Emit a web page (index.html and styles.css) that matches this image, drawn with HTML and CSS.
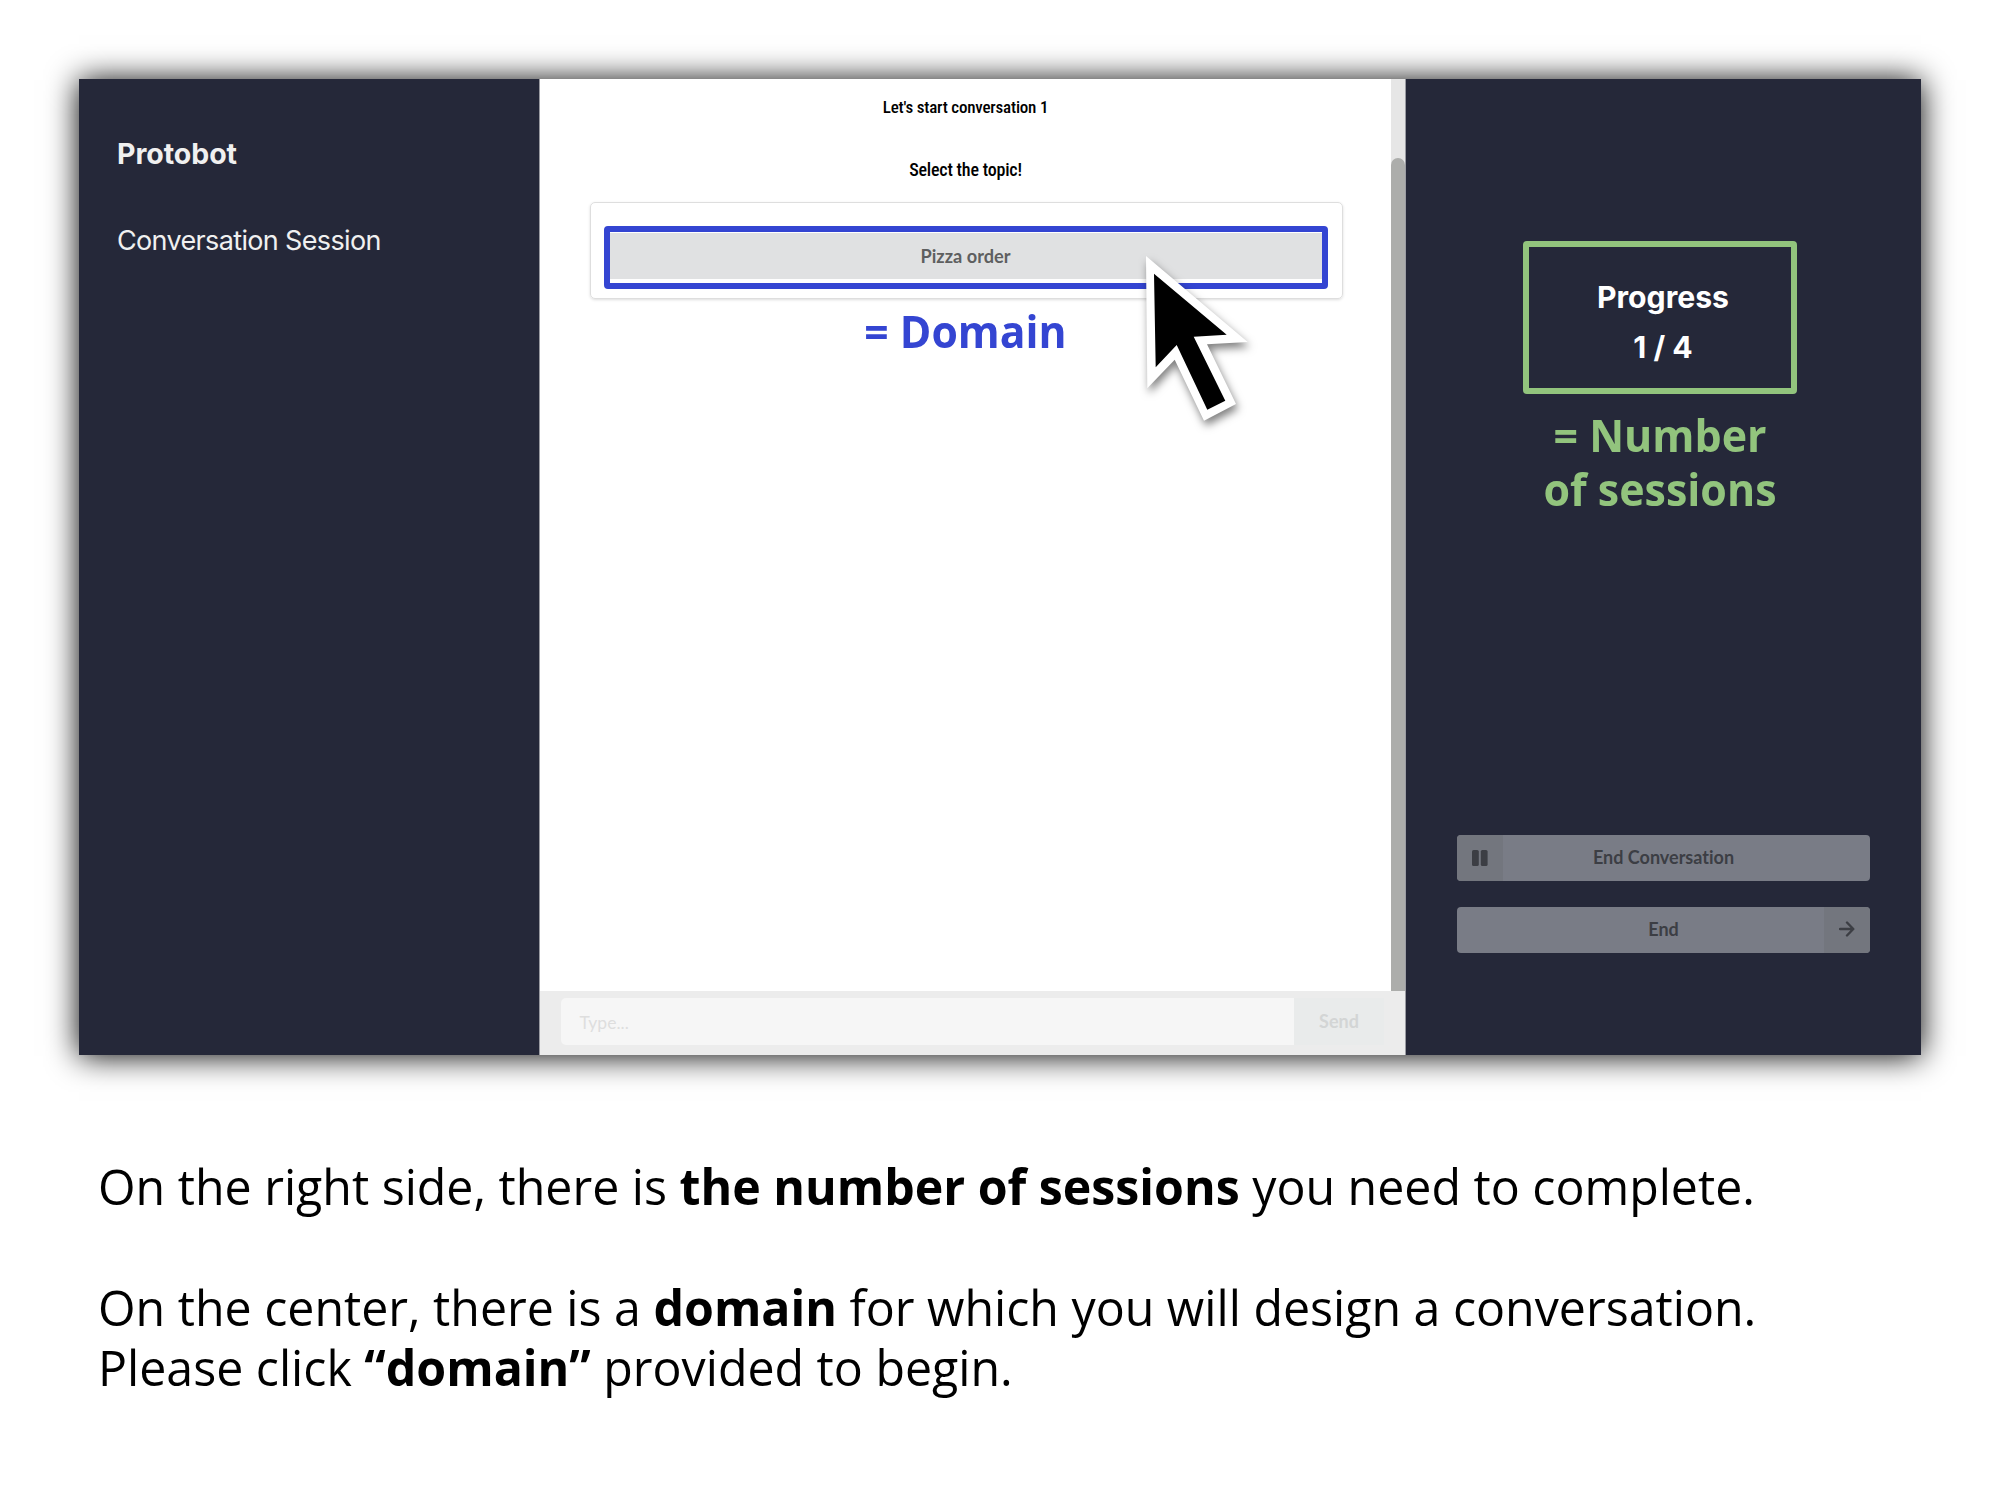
FILE: index.html
```html
<!DOCTYPE html>
<html lang="en">
<head>
<meta charset="utf-8">
<title>Protobot guide</title>
<link rel="stylesheet" href="styles.css">
</head>
<body>
<main class="slide">
  <section class="app">
    <aside class="sidebar">
      <h1 class="brand">Protobot</h1>
      <p class="nav-item">Conversation Session</p>
    </aside>
    <div class="center">
      <div class="chat">
        <div class="messages">
          <p class="notice">Let's start conversation 1</p>
          <p class="notice topic">Select the topic!</p>
          <div class="card"><div class="highlight"><button class="pizza">Pizza order</button></div></div>
          <p class="label domain">= Domain</p>
        </div>
        <div class="track"><div class="thumb"></div></div>
      </div>
      <div class="composer"><div class="field">Type...</div><div class="send">Send</div></div>
    </div>
    <aside class="status">
      <div class="progress"><span>Progress</span><span>1 / 4</span></div>
      <p class="label sessions">= Number<br>of sessions</p>
      <div class="actions">
        <div class="action"><span class="seg left"><svg width="16" height="16" viewBox="0 0 16 16"><rect x="0" y="0" width="6.8" height="16" rx="1.6"/><rect x="8.8" y="0" width="6.8" height="16" rx="1.6"/></svg></span>End Conversation</div>
        <div class="action">End<span class="seg right"><svg width="16" height="16" viewBox="0 0 16 16"><path d="M1 8H14M8 1.5L14.3 8L8 14.5" fill="none" stroke="#3c3e44" stroke-width="2.4" stroke-linecap="round" stroke-linejoin="round"/></svg></span></div>
      </div>
    </aside>
    <svg class="cursor" width="120" height="180" viewBox="0 0 120 180"><path d="M6 6L107.7 92L67 94.3L96 154L64 170.7L34.7 109.7L7.3 138.3Z" fill="#fff"/><path d="M14 23.7L86.7 84.7L53.7 86.7L85.3 150.7L67.3 159.7L36.7 95L15.7 117.3Z"/></svg>
  </section>
  <section class="copy">
    <p>On the right side, there is <b>the number of sessions</b> you need to complete.</p>
    <p class="gap">On the center, there is a <b>domain</b> for which you will design a conversation.</p>
    <p>Please click <b>“domain”</b> provided to begin.</p>
  </section>
</main>
</body>
</html>
```
FILE: styles.css
```css
* { box-sizing: border-box; margin: 0; padding: 0; }
body { width: 2000px; height: 1500px; background: #fff; color: #000; font-family: "Open Sans", "Noto Sans", sans-serif; overflow: hidden; }
.slide { padding: 79px 79px 0; }
.app { position: relative; display: flex; height: 976px; background: #252839; box-shadow: 0 1px 30px #000; }
.sidebar { width: 460px; padding: 54px 0 0 38px; color: #f0f0f0; font-family: Inter, sans-serif; }
.brand { font-size: 28.5px; font-weight: 700; letter-spacing: -0.05px; line-height: 41px; }
.nav-item { margin-top: 47px; font-size: 27px; line-height: 40px; letter-spacing: -0.65px; }
.center { width: 867px; display: flex; flex-direction: column; background: #fff; border: solid #9a9ba2; border-width: 0 1px; }
.chat { flex: 1; display: flex; }
.messages { flex: 1; }
.notice { margin-top: 17px; font: 500 17px/22px Roboto, sans-serif; font-stretch: 75%; letter-spacing: -0.2px; text-align: center; }
.topic { margin-top: 41px; font-size: 18px; }
.card { width: 753px; height: 97px; margin: 21px 0 0 50px; padding: 23px 12.5px 0; border: 1.5px solid #dedede; border-radius: 5px; box-shadow: 0 1px 3px #ddd; }
.highlight { height: 63px; width: 724px; border: 6px solid #3445d2; border-radius: 4px; padding-top: 1px; }
.pizza { display: block; width: 100%; height: 46px; border: 0; background: #e0e1e2; color: #5e5f60; font: bold 18.2px/46px Lato, sans-serif; }
.label { font-weight: 700; font-size: 44px; line-height: 54px; text-align: center; transform: scaleX(.97); }
.domain { color: #3445d2; margin-top: 5px; }
.track { width: 14px; background: #e6e6e6; padding-top: 79px; }
.thumb { height: 100%; background: #acadab; border-radius: 7px 7px 0 0; }
.composer { height: 64px; background: #ececec; display: flex; padding: 7px 21px; }
.field { width: 733px; height: 47px; background: #f6f6f6; border-radius: 5px 0 0 5px; padding-left: 18.5px; color: #dedede; font: 17.5px/50px Lato, sans-serif; }
.send { flex: 1; height: 47px; background: #e9ebeb; color: #d3d5d5; font: bold 18px/47px Lato, sans-serif; text-align: center; }
.status { flex: 1; display: flex; flex-direction: column; padding: 162px 51px 0; align-items: stretch; }
.progress { width: 274px; height: 153px; margin-left: 66px; border: 6px solid #92c47d; border-radius: 4px; display: flex; flex-direction: column; align-items: center; padding: 25px 0 0 6px; color: #fff; font: 700 30.2px/50px Inter, sans-serif; }
.sessions { color: #92c47d; margin: 14px 0 0 -7px; transform: scaleX(.976); }
.actions { margin-top: 319px; display: grid; gap: 25.5px; }
.action { position: relative; height: 46px; border-radius: 4px; background: #797c86; color: #3c3e44; font: bold 18px/45.5px Lato, sans-serif; font-variant-ligatures: none; text-align: center; overflow: hidden; }
.seg { position: absolute; top: 0; width: 46px; height: 46px; display: grid; place-items: center; background: #73767e; fill: #3c3e44; }
.seg svg { margin-top: -1px; }
.left { left: 0; }
.right { right: 0; }
.cursor { position: absolute; left: 1061px; top: 171px; filter: drop-shadow(2px 5px 4px rgba(0,0,0,.5)); overflow: visible; }
.copy { padding: 101px 0 0 18.5px; font-size: 50px; font-weight: 425; line-height: 60.4px; }
.copy p { white-space: pre; transform: scaleX(.9655); transform-origin: 0 0; }
.copy b { font-weight: 700; }
.copy .gap { margin-top: 60.4px; }
```
